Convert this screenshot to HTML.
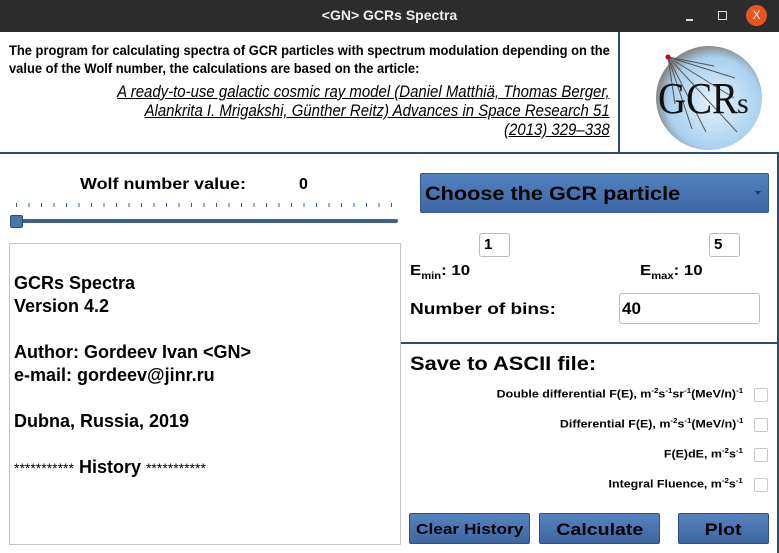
<!DOCTYPE html><html><head><style>
*{margin:0;padding:0;box-sizing:border-box}
body{width:779px;height:553px;position:relative;background:#fff;font-family:"Liberation Sans",sans-serif;overflow:hidden}
.a{position:absolute}
.b{font-weight:bold}
.sx{transform-origin:left center;white-space:nowrap}
.btn{position:absolute;background:linear-gradient(#5683bf,#3d66a2);border:1px solid #2f4f80;border-radius:2px;font-weight:bold;font-size:17px;text-align:center;line-height:31px;color:#000}
.btn span{display:inline-block;transform:scaleX(1.15)}
.cb{position:absolute;left:754px;width:14px;height:14px;border:1px solid #c8c8c8;border-radius:2px;background:#fff}
.lab{position:absolute;right:36px;font-weight:bold;font-size:11px;white-space:nowrap;transform:scaleX(1.13);transform-origin:right center}
.in{position:absolute;border:1px solid #bbb;border-radius:3px;background:#fff;font-weight:bold}
sup{font-size:7px}
</style></head><body>
<div class="a" style="left:0;top:0;width:779px;height:32px;background:#2c2c2c"></div>
<div class="a b" style="left:0;top:7px;width:779px;text-align:center;color:#eee;font-size:14px">&lt;GN&gt; GCRs Spectra</div>
<div class="a" style="left:686px;top:19px;width:7px;height:2px;background:#ddd"></div>
<div class="a" style="left:718px;top:11px;width:9px;height:9px;border:1.5px solid #ddd"></div>
<div class="a" style="left:746px;top:5px;width:21px;height:21px;border-radius:50%;background:#e95420;color:#fff;font-size:12px;text-align:center;line-height:21px">X</div>

<div class="a b sx" style="left:9px;top:42px;font-size:13.5px;line-height:18px;transform:scaleX(0.957)">The program for calculating spectra of GCR particles with spectrum modulation depending on the<br>value of the Wolf number, the calculations are based on the article:</div>
<div class="a" style="right:169px;top:82px;text-align:right;font-size:17px;font-style:italic;text-decoration:underline;line-height:19px;white-space:nowrap;transform:scaleX(0.88);transform-origin:right center">A ready-to-use galactic cosmic ray model (Daniel Matthiä, Thomas Berger,<br>Alankrita I. Mrigakshi, Günther Reitz) Advances in Space Research 51<br>(2013) 329–338</div>
<div class="a" style="left:618px;top:32px;width:2px;height:122px;background:#2a4a7a"></div>
<div class="a" style="left:0;top:152px;width:779px;height:2px;background:#2a4a7a"></div>
<svg class="a" style="left:640px;top:40px" width="130" height="112">
<defs><radialGradient id="g" cx="0.55" cy="0.55" r="0.55"><stop offset="0" stop-color="#e4f3fd"/><stop offset="0.8" stop-color="#a9d0ee"/><stop offset="1" stop-color="#8a8a8a"/></radialGradient></defs>
<ellipse cx="69" cy="58" rx="53" ry="52" fill="url(#g)"/>
<g stroke="#555" stroke-width="1"><line x1="28" y1="17" x2="74" y2="26"/><line x1="28" y1="17" x2="95" y2="38"/><line x1="28" y1="17" x2="35" y2="64"/><line x1="28" y1="17" x2="52" y2="89"/><line x1="28" y1="17" x2="66" y2="92"/><line x1="28" y1="17" x2="97" y2="92"/><line x1="28" y1="17" x2="94" y2="58"/></g>
<circle cx="28" cy="17" r="2.5" fill="#c00"/>
<text x="18" y="73" font-family="Liberation Serif,serif" font-size="44" fill="#111" textLength="80" lengthAdjust="spacingAndGlyphs">GCR</text><text x="97" y="73" font-family="Liberation Serif,serif" font-size="30" fill="#111">s</text>
</svg>

<div class="a b sx" style="left:80px;top:176px;font-size:16px;transform:scaleX(1.12)">Wolf number value:</div>
<div class="a b" style="left:299px;top:176px;font-size:16px">0</div>
<div class="a" style="left:16px;top:203px;width:378px;height:4px;background:repeating-linear-gradient(90deg,#3a5f8f 0 1px,transparent 1px 12.5px)"></div>
<div class="a" style="left:16px;top:219px;width:382px;height:4px;background:#3d5f90;border-radius:2px"></div>
<div class="a" style="left:10px;top:215px;width:13px;height:13px;background:#4a74ad;border:1px solid #2c4c7c;border-radius:2px"></div>

<div class="a" style="left:9px;top:243px;width:392px;height:302px;border:1px solid #c4c4c4"></div>
<div class="a b" style="left:14px;top:272px;font-size:18px;line-height:23px">GCRs Spectra<br>Version 4.2<br><br>Author: Gordeev Ivan &lt;GN&gt;<br>e-mail: gordeev@jinr.ru<br><br>Dubna, Russia, 2019<br><br><span style="font-weight:normal;font-size:14px">***********</span> History <span style="font-weight:normal;font-size:14px">***********</span></div>

<div class="a" style="left:401px;top:342px;width:378px;height:2px;background:#2a4a7a"></div>
<div class="a" style="left:777px;top:153px;width:2px;height:400px;background:#2a4a7a"></div>

<div class="a" style="left:420px;top:173px;width:349px;height:40px;background:linear-gradient(#5282bf,#3d67a3);border:1px solid #35598d;border-radius:2px"></div>
<div class="a b sx" style="left:425px;top:184px;font-size:19px;transform:scaleX(1.14)">Choose the GCR particle</div>
<div class="a" style="left:755px;top:191px;border:3px solid transparent;border-top:4px solid #22385a"></div>
<div class="in" style="left:479px;top:233px;width:31px;height:24px;font-size:15px;padding:2px 4px">1</div>
<div class="in" style="left:709px;top:233px;width:31px;height:24px;font-size:15px;padding:2px 4px">5</div>
<div class="a b sx" style="left:410px;top:262px;font-size:15px;transform:scaleX(1.12)">E<sub style="font-size:10px">min</sub>: 10</div>
<div class="a b sx" style="left:640px;top:262px;font-size:15px;transform:scaleX(1.12)">E<sub style="font-size:10px">max</sub>: 10</div>
<div class="a b sx" style="left:410px;top:301px;font-size:16px;transform:scaleX(1.19)">Number of bins:</div>
<div class="in" style="left:619px;top:293px;width:141px;height:31px;font-size:17px;padding:5px 2px">40</div>

<div class="a b sx" style="left:410px;top:354px;font-size:19px;transform:scaleX(1.15)">Save to ASCII file:</div>
<div class="lab" style="top:388px">Double differential F(E), m<sup>-2</sup>s<sup>-1</sup>sr<sup>-1</sup>(MeV/n)<sup>-1</sup></div>
<div class="lab" style="top:418px">Differential F(E), m<sup>-2</sup>s<sup>-1</sup>(MeV/n)<sup>-1</sup></div>
<div class="lab" style="top:448px">F(E)dE, m<sup>-2</sup>s<sup>-1</sup></div>
<div class="lab" style="top:478px">Integral Fluence, m<sup>-2</sup>s<sup>-1</sup></div>
<div class="cb" style="top:388px"></div><div class="cb" style="top:418px"></div><div class="cb" style="top:448px"></div><div class="cb" style="top:478px"></div>

<div class="btn" style="left:409px;top:513px;width:121px;height:31px;font-size:15px"><span>Clear History</span></div>
<div class="btn" style="left:539px;top:513px;width:121px;height:31px"><span>Calculate</span></div>
<div class="btn" style="left:678px;top:513px;width:91px;height:31px"><span>Plot</span></div>
</body></html>
